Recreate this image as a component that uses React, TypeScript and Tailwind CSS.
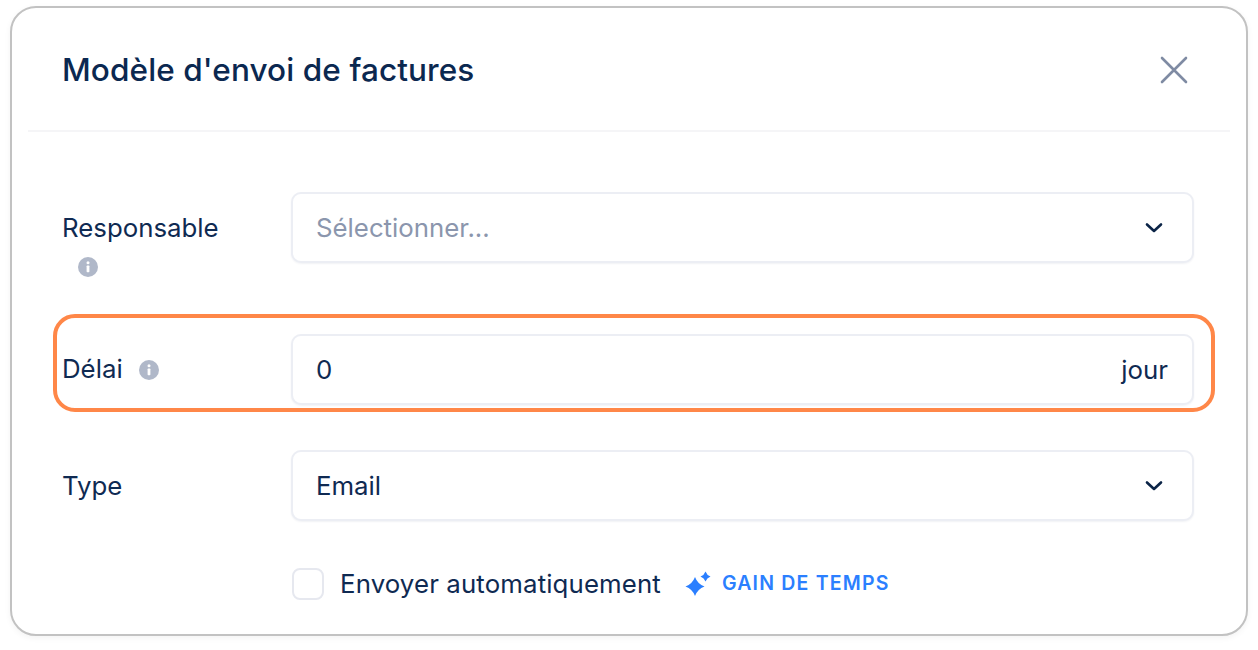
import React from "react";

function Chevron() {
  return (
    <svg width="18" height="12" viewBox="0 0 18 12" fill="none" className="mr-[5px] shrink-0">
      <path d="M2 2.5 L9 9 L16 2.5" stroke="#0b2447" strokeWidth="2.6" strokeLinecap="round" strokeLinejoin="round" />
    </svg>
  );
}

function Info() {
  return (
    <svg width="20" height="20" viewBox="0 0 20 20" className="shrink-0">
      <circle cx="10" cy="10" r="10" fill="#b0b8c9" />
      <circle cx="10" cy="5.8" r="1.5" fill="#fff" />
      <rect x="8.6" y="8.5" width="2.8" height="6.8" rx="0.8" fill="#fff" />
    </svg>
  );
}

const box =
  "flex h-[71px] flex-1 items-center justify-between rounded-[10px] border-2 border-[#eceef4] bg-white pl-[23px] pr-6 pt-[1px] text-[25.8px] shadow-[0_1px_2px_rgba(20,40,80,0.06)]";

export default function App() {
  return (
    <div className="h-[650px] w-[1258px] overflow-hidden bg-white pl-[10px] pt-[6px] text-[#0f2a52] [font-family:Inter,sans-serif]">
      <div className="h-[630px] w-[1238px] rounded-[26px] border-2 border-[#c2c2c2] bg-white px-[16px] shadow-[0_2px_6px_rgba(0,0,0,0.05)]">
        <div className="flex h-[124px] items-center justify-between border-b-2 border-[#f5f5f7] pl-[34px] pr-[42px] pt-[2px]">
          <h1 className="text-[31.5px] font-medium leading-none tracking-[0.1px] text-[#0b2850]">Modèle d'envoi de factures</h1>
          <svg width="28" height="28" viewBox="0 0 28 28" fill="none">
            <path d="M2 2 L26 26 M26 2 L2 26" stroke="#7f8ba3" strokeWidth="2.6" strokeLinecap="round" />
          </svg>
        </div>

        <div className="pl-[34px] pr-[36px] pt-[60px]">
          <div className="flex items-start">
            <div className="w-[229px] shrink-0 pt-[17px]">
              <div className="text-[25.8px] leading-[38px]">Responsable</div>
              <div className="pl-[16px] pt-[10px]"><Info /></div>
            </div>
            <div className={box}>
              <span className="text-[#8b96ad]">Sélectionner...</span>
              <Chevron />
            </div>
          </div>

          <div className="-ml-[9px] -mr-[21px] mt-[37px] flex h-[98px] items-center rounded-[22px] border-4 border-[#ff8748] pl-[5px] pr-[17px] pt-[13px]">
            <div className="flex w-[229px] shrink-0 items-center gap-[16px] text-[25.8px]">
              <span>Délai</span>
              <Info />
            </div>
            <div className={box}>
              <span>0</span>
              <span>jour</span>
            </div>
          </div>

          <div className="mt-[38px] flex items-center">
            <div className="w-[229px] shrink-0 pt-[1px] text-[25.8px]">Type</div>
            <div className={box}>
              <span>Email</span>
              <Chevron />
            </div>
          </div>

          <div className="mt-[44px] flex items-center pl-[230px]">
            <div className="h-[32px] w-[32px] rounded-[8px] border-2 border-[#e6e8ef] bg-white" />
            <span className="ml-[16px] text-[25.8px] tracking-[0.13px]">Envoyer automatiquement</span>
            <svg width="26" height="26" viewBox="0 0 26 26" className="ml-[24px]" fill="#2b7fff">
              <path d="M10 6 Q12.6 13 19.5 15.500 Q12.6 18 10 25 Q7.400 18 0.500 15.500 Q7.400 13 10 6 Z" />
              <path d="M20.500 0.500 Q21.800 4.200 25.500 5.500 Q21.800 6.800 20.500 10.500 Q19.200 6.800 15.500 5.500 Q19.200 4.200 20.500 0.500 Z" />
            </svg>
            <span className="mb-[2px] ml-[11px] text-[19.5px] font-semibold tracking-[1.2px] text-[#2b7fff]">GAIN DE TEMPS</span>
          </div>
        </div>
      </div>
    </div>
  );
}
